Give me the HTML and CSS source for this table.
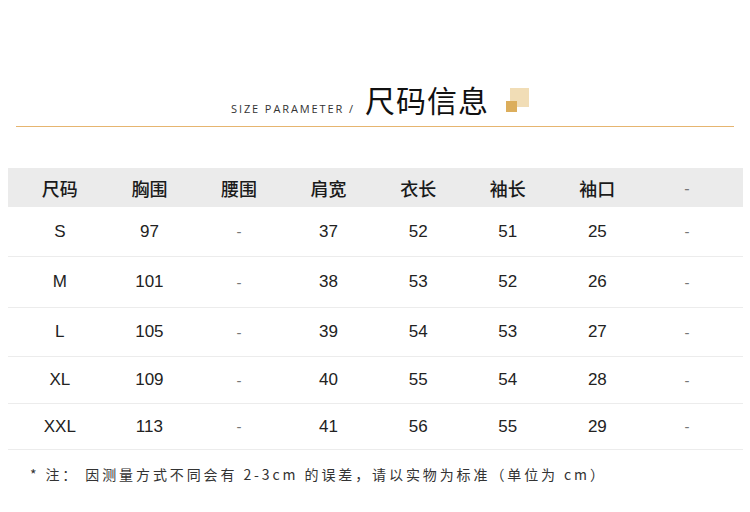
FILE: index.html
```html
<!DOCTYPE html>
<html lang="zh">
<head>
<meta charset="utf-8">
<link rel="stylesheet" href="styles.css">
</head>
<body>
<div class="page">
  <div class="title">
    <span class="sub">SIZE PARAMETER /</span>
    <span class="main">尺码信息</span>
    <span class="deco"><span class="sq-light"></span><span class="sq-dark"></span></span>
  </div>
  <div class="rule"></div>
  <div class="table">
    <div class="row head">
      <div>尺码</div><div>胸围</div><div>腰围</div><div>肩宽</div><div>衣长</div><div>袖长</div><div>袖口</div><div class="dash">-</div>
    </div>
    <div class="row r1"><div>S</div><div>97</div><div class="dash">-</div><div>37</div><div>52</div><div>51</div><div>25</div><div class="dash">-</div></div>
    <div class="row r2"><div>M</div><div>101</div><div class="dash">-</div><div>38</div><div>53</div><div>52</div><div>26</div><div class="dash">-</div></div>
    <div class="row r3"><div>L</div><div>105</div><div class="dash">-</div><div>39</div><div>54</div><div>53</div><div>27</div><div class="dash">-</div></div>
    <div class="row r4"><div>XL</div><div>109</div><div class="dash">-</div><div>40</div><div>55</div><div>54</div><div>28</div><div class="dash">-</div></div>
    <div class="row r5"><div>XXL</div><div>113</div><div class="dash">-</div><div>41</div><div>56</div><div>55</div><div>29</div><div class="dash">-</div></div>
  </div>
  <p class="note">* 注： 因测量方式不同会有 2-3cm 的误差，请以实物为标准（单位为 cm）</p>
</div>
</body>
</html>
```
FILE: styles.css
```css
html, body {
  margin: 0;
  padding: 0;
  background: #fff;
}
.page {
  width: 750px;
  height: 512px;
  font-family: "Liberation Sans", "Noto Sans CJK SC", sans-serif;
  color: #222;
}
.title {
  display: flex;
  align-items: flex-end;
  padding: 84px 0 0 231px;
  height: 35px;
}
.sub {
  font-family: "Open Sans", "Liberation Sans", sans-serif;
  font-size: 11px;
  letter-spacing: 1.9px;
  color: #333;
  line-height: 11px;
  margin-bottom: 5px;
}
.main {
  font-family: "Noto Sans CJK SC", sans-serif;
  font-size: 30px;
  line-height: 32px;
  color: #111;
  margin-left: 10px;
  margin-bottom: 4px;
  letter-spacing: 1px;
}
.deco {
  position: relative;
  width: 24px;
  height: 25px;
  margin-left: 17px;
  margin-bottom: 6px;
}
.sq-light {
  position: absolute;
  left: 4px;
  top: 0;
  width: 19px;
  height: 19px;
  background: #f1ddb6;
}
.sq-dark {
  position: absolute;
  left: 0;
  top: 13px;
  width: 11px;
  height: 11px;
  background: #dcae5c;
}
.rule {
  margin: 7px 16px 0 16px;
  height: 1px;
  background: #e6b570;
}
.table {
  margin: 41px 7px 0 8px;
}
.row {
  display: grid;
  grid-template-columns: repeat(8, 89.6px);
  padding-left: 7px;
  align-items: center;
  border-bottom: 1px solid #ececec;
  font-size: 17px;
  color: #222;
}
.row > div {
  text-align: center;
}
.head {
  background: #ebebeb;
  height: 39px;
  border-bottom: none;
  font-family: "Noto Sans CJK SC", sans-serif;
  font-size: 18px;
  font-weight: 500;
  color: #1a1a1a;
}
.r1 { height: 49px; }
.r2 { height: 50px; }
.r3 { height: 48px; }
.r4 { height: 46px; }
.r5 { height: 45px; }
.dash {
  color: #777;
  font-size: 15px;
}
.note {
  margin: 14px 0 0 30px;
  font-family: "Noto Sans CJK SC", sans-serif;
  font-size: 14px;
  letter-spacing: 2.9px;
  color: #333;
  line-height: 20px;
}
```
